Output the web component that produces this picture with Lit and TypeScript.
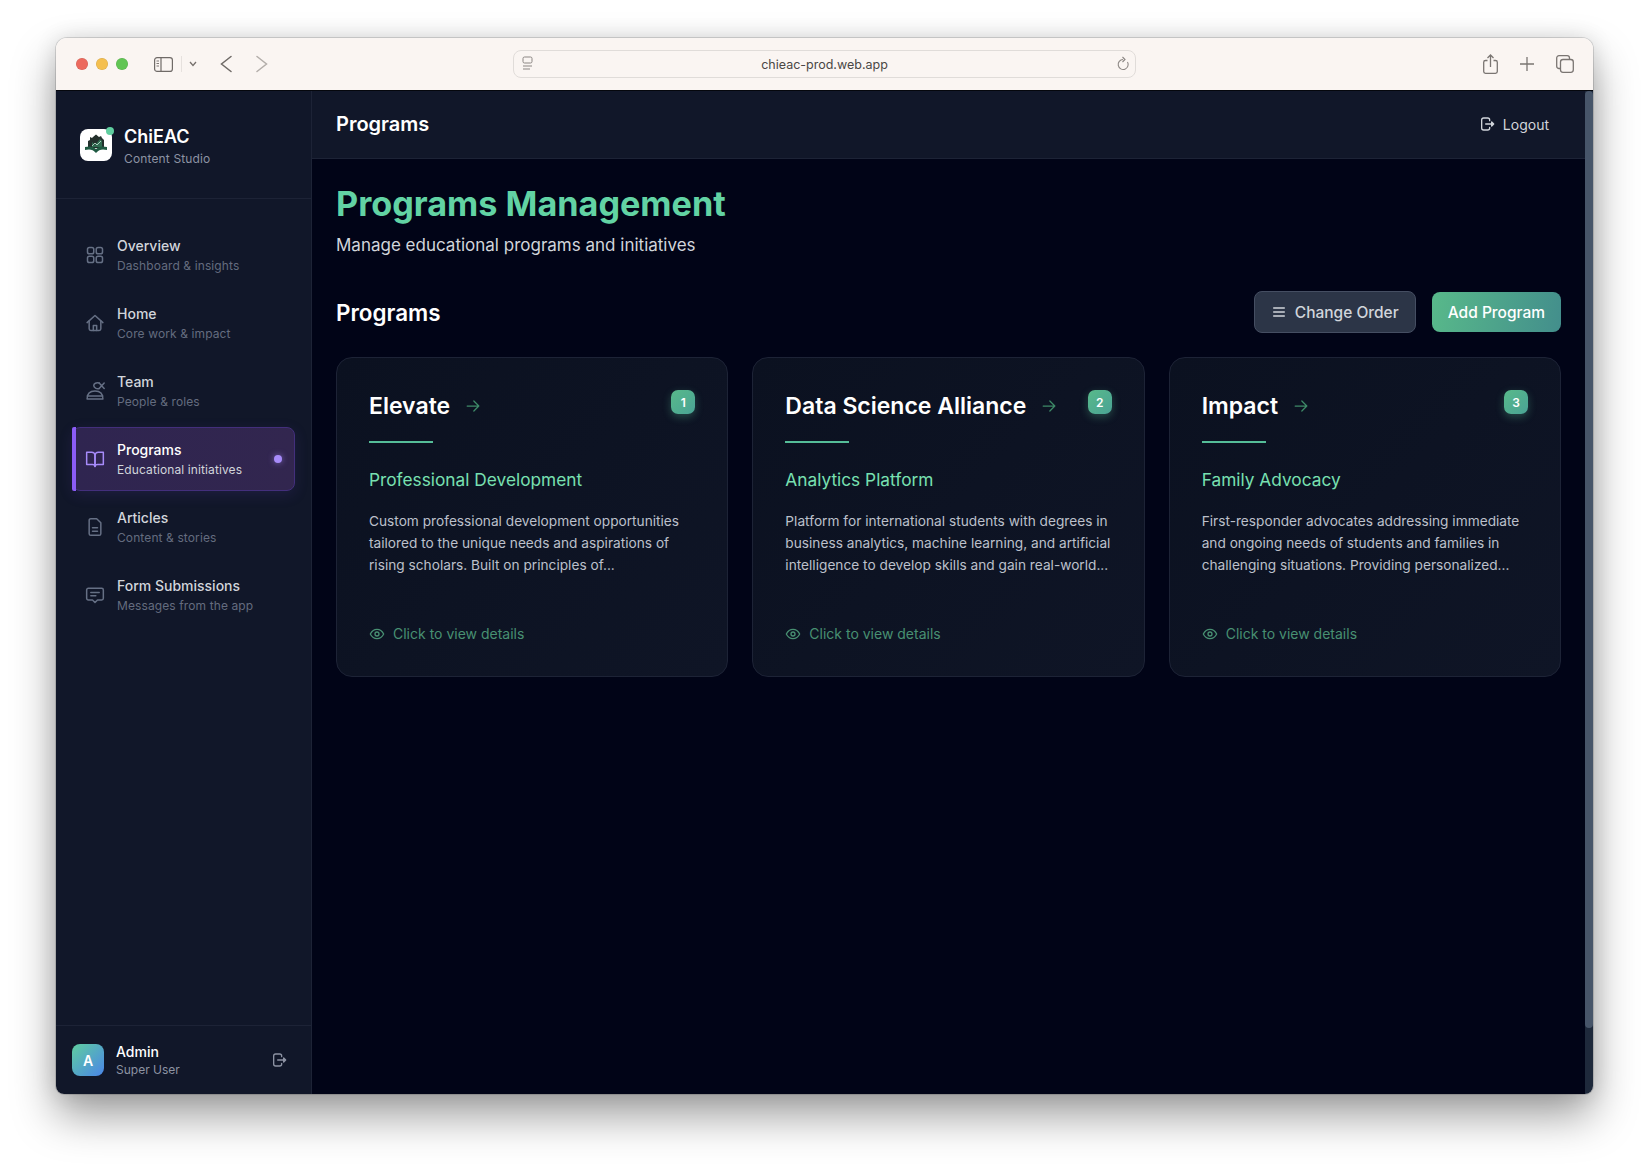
import { LitElement, html, css, svg } from "lit";
import { customElement } from "lit/decorators.js";

const ic = (body: unknown, size = 20, sw = 2) => html`<svg width=${size} height=${size} viewBox="0 0 24 24" fill="none" stroke="currentColor" stroke-width=${sw} stroke-linecap="round" stroke-linejoin="round">${body}</svg>`;

const logoutP = svg`<path d="M16 7V6a3 3 0 0 0-3-3H7a3 3 0 0 0-3 3v12a3 3 0 0 0 3 3h6a3 3 0 0 0 3-3v-1"/><path d="M10 12h9"/><path d="M19 9l3 3-3 3z" fill="currentColor"/>`;

const nav = [
  { t: "Overview", s: "Dashboard & insights", i: svg`<rect x="3" y="3" width="7.500" height="7.500" rx="2.200"/><rect x="13.500" y="3" width="7.500" height="7.500" rx="2.200"/><rect x="3" y="13.500" width="7.500" height="7.500" rx="2.200"/><rect x="13.500" y="13.500" width="7.500" height="7.500" rx="2.200"/>` },
  { t: "Home", s: "Core work & impact", i: svg`<path d="M2.500 11.500L12 3l9.500 8.500"/><path d="M5 9.500V19a2 2 0 0 0 2 2h10a2 2 0 0 0 2-2V9.500"/><path d="M10 21v-6h4v6"/>` },
  { t: "Team", s: "People & roles", i: svg`<path d="M2.500 21.500c0-6 3-9.500 9.500-9.500s9.500 3.500 9.500 9.500z"/><path d="M2.800 18h18.400"/><path d="M17 2.500c-3.500-1-6.500 .5-6.500 3S14 10 17 9"/><path d="M17 2.500l6 6.500M17 9l6-6.500"/>` },
  { t: "Programs", s: "Educational initiatives", active: true, i: svg`<path d="M2 4h6a4 4 0 0 1 4 3.500V21a3 3 0 0 0-3-2.500H2z"/><path d="M22 4h-6a4 4 0 0 0-4 3.500V21a3 3 0 0 1 3-2.500h7z"/>` },
  { t: "Articles", s: "Content & stories", i: svg`<path d="M14 2H7a2 2 0 0 0-2 2v16a2 2 0 0 0 2 2h10a2 2 0 0 0 2-2V7z"/><path d="M9 13h6"/><path d="M9 17h6"/>` },
  { t: "Form Submissions", s: "Messages from the app", i: svg`<path d="M4 4h16a2 2 0 0 1 2 2v10a2 2 0 0 1-2 2h-5l-3 3-3-3H4a2 2 0 0 1-2-2V6a2 2 0 0 1 2-2z"/><path d="M7 9h10"/><path d="M7 13h6"/>` },
];

const cards = [
  { n: 1, t: "Elevate", s: "Professional Development", d: "Custom professional development opportunities tailored to the unique needs and aspirations of rising scholars. Built on principles of..." },
  { n: 2, t: "Data Science Alliance", s: "Analytics Platform", d: "Platform for international students with degrees in business analytics, machine learning, and artificial intelligence to develop skills and gain real-world..." },
  { n: 3, t: "Impact", s: "Family Advocacy", d: "First-responder advocates addressing immediate and ongoing needs of students and families in challenging situations. Providing personalized..." },
];

@customElement("app-root")
export class AppRoot extends LitElement {
  static styles = css`
    :host { display: block; width: 1649px; height: 1168px; box-sizing: border-box; padding: 38px 56px 74px; background: #fff; font-family: Inter, "Liberation Sans", sans-serif; overflow: hidden; }
    * { box-sizing: border-box; }
    .win { width: 1537px; height: 1056px; border-radius: 11px 11px 8px 8px; overflow: hidden; display: flex; flex-direction: column; box-shadow: 0 22px 44px rgba(0,0,0,.38), 0 0 22px rgba(0,0,0,.12), 0 0 0 1px rgba(0,0,0,.13); }
    .chrome { height: 52px; flex: none; background: #faf5f2; display: flex; align-items: center; padding-left: 20px; color: #6f6a67; position: relative; }
    .dots { display: flex; gap: 8px; }
    .dot { width: 12px; height: 12px; border-radius: 50%; box-shadow: inset 0 0 0 .5px rgba(0,0,0,.12); }
    .sb { margin-left: 26px; display: flex; }
    .sep { width: 1px; height: 16px; background: #e6e1de; margin-left: 8px; }
    .chev { margin-left: 7px; display: flex; color: #77716e; }
    .nav { display: flex; margin-left: 23px; gap: 24px; }
    .url { position: absolute; left: 457px; width: 623px; top: 12px; height: 28px; border: 1px solid #e0dcd9; border-radius: 8px; display: flex; align-items: center; justify-content: center; font-size: 12.500px; color: #4a4745; }
    .url .l { position: absolute; left: 7px; top: 5px; display: flex; color: #8b8683; }
    .url .r { position: absolute; right: 4px; top: 5px; display: flex; color: #8b8683; }
    .tools { margin-left: auto; display: flex; align-items: center; gap: 22px; padding-right: 19px; color: #7a7572; }
    .body { flex: 1; display: flex; min-height: 0; border-top: 1px solid #05070d; }
    .side { width: 256px; flex: none; background: #111729; border-right: 1px solid #1d2336; display: flex; flex-direction: column; }
    .brand { height: 108px; flex: none; border-bottom: 1px solid #1d2336; display: flex; align-items: center; padding: 0 24px; gap: 12px; }
    .logo { width: 32px; height: 32px; background: #fff; border-radius: 8px; position: relative; display: flex; align-items: center; justify-content: center; }
    .logo i { position: absolute; top: -2px; right: -2px; width: 8px; height: 8px; border-radius: 50%; background: #5fce9f; }
    .bname { font-size: 18px; font-weight: 600; color: #fff; line-height: 28px; }
    .bsub { font-size: 12px; color: #8d93a3; line-height: 16px; letter-spacing: .012em; }
    .menu { flex: 1; padding: 24px 16px; display: flex; flex-direction: column; gap: 4px; }
    .item { height: 64px; border-radius: 8px; display: flex; align-items: center; padding-left: 12px; gap: 12px; color: #667085; position: relative; border: 1px solid transparent; }
    .item .ico { display: flex; width: 20px; }
    .item .t { font-size: 14px; font-weight: 500; color: #d1d5db; line-height: 20px; }
    .item .s { font-size: 12px; color: #646c7f; line-height: 16px; margin-top: 2px; letter-spacing: .009em; }
    .item.on { background: linear-gradient(90deg, #2f2550, #32264f); border-color: #432f7c; box-shadow: 0 4px 14px rgba(88,60,170,.18); color: #a78bfa; }
    .item.on .t { color: #fff; }
    .item.on .s { color: #d1d5db; }
    .bar { position: absolute; left: -1px; top: -1px; bottom: -1px; width: 4px; background: #8b5cf6; border-radius: 2px 0 0 2px; }
    .pulse { position: absolute; right: 12px; top: 27px; width: 8px; height: 8px; border-radius: 50%; background: #a78bfa; box-shadow: 0 0 6px rgba(167,139,250,.6); }
    .user { height: 69px; flex: none; border-top: 1px solid #1d2336; display: flex; align-items: center; padding: 0 24px 0 16px; gap: 12px; }
    .av { width: 32px; height: 32px; border-radius: 8px; background: linear-gradient(135deg, #5fce9f, #4a85e8); color: #fff; font-size: 14px; font-weight: 600; display: flex; align-items: center; justify-content: center; }
    .uname { font-size: 14px; font-weight: 500; color: #fff; line-height: 20px; }
    .urole { font-size: 12px; color: #8d93a3; line-height: 16px; }
    .uout { margin-left: auto; display: flex; color: #8d93a3; }
    .main { flex: 1; min-width: 0; display: flex; flex-direction: column; background: #010417; }
    .top { height: 68px; flex: none; background: #111729; border-bottom: 1px solid #1d2336; display: flex; align-items: center; justify-content: space-between; padding: 0 24px 1px 24px; }
    .top h2 { margin: 0; font-size: 20px; font-weight: 600; color: #fff; }
    .out { display: flex; align-items: center; gap: 8px; padding: 0 12px; font-size: 14px; color: #d1d5db; }
    .out span { display: flex; }
    .content { flex: 1; padding: 25px 24px 24px; }
    h1 { margin: 0; font-size: 34.200px; line-height: 40px; font-weight: 700; color: #62d3a4; }
    .lead { font-size: 17px; line-height: 28px; color: #d1d5db; margin-top: 7px; }
    .row { display: flex; align-items: center; justify-content: space-between; margin-top: 32px; height: 42px; }
    .row h3 { margin: 0; padding-top: 2px; font-size: 22.400px; line-height: 32px; font-weight: 600; color: #fff; }
    .btns { display: flex; gap: 16px; align-items: center; }
    .b { height: 42px; border-radius: 8px; border: 1px solid #454e62; background: #2c3547; color: #d1d5db; font-size: 15.500px; font-weight: 500; display: flex; align-items: center; gap: 8px; padding: 0 16px; }
    .b svg { display: block; }
    .g { height: 40px; border: 0; background: linear-gradient(100deg, #58b98a, #438e8c); color: #fff; }
    .grid { display: grid; grid-template-columns: repeat(3, 1fr); gap: 24px; margin-top: 24px; }
    .card { height: 320px; border-radius: 16px; border: 1px solid #1d2336; background: linear-gradient(135deg, #0b1120, #0f1526); padding: 32px; position: relative; display: flex; flex-direction: column; }
    .ct { display: flex; align-items: center; gap: 13px; height: 32px; }
    .ct b { font-size: 23px; line-height: 32px; font-weight: 600; color: #fff; }
    .ct span { display: flex; color: #3e8a68; }
    .num { position: absolute; top: 32px; right: 32px; width: 24px; height: 24px; border-radius: 7px; background: linear-gradient(135deg, #58b98a, #4aa395); box-shadow: 0 3px 8px rgba(95,206,159,.3); color: #fff; font-size: 12px; font-weight: 600; display: flex; align-items: center; justify-content: center; }
    .rule { width: 64px; height: 2px; background: #55bd98; margin-top: 19px; }
    .sub { font-size: 17.300px; line-height: 28px; color: #78e0b1; margin-top: 23px; }
    .desc { font-size: 13.700px; line-height: 22px; color: #bcc0cb; margin-top: 16px; }
    .view { margin-top: auto; display: flex; align-items: center; gap: 8px; font-size: 14px; line-height: 20px; color: #489072; }
    .view span { display: flex; }
    .scroll { width: 8px; flex: none; background: #1e293b; }
    .scroll div { height: 937px; background: #475569; border-radius: 4px; }
  `;

  render() {
    return html`<div class="win">
      <div class="chrome">
        <div class="dots"><div class="dot" style="background:#ec6a5e"></div><div class="dot" style="background:#f4bf4f"></div><div class="dot" style="background:#61c554"></div></div>
        <div class="sb"><svg width="19" height="15" viewBox="0 0 19 15" fill="none" stroke="currentColor" stroke-width="1.200"><rect x=".6" y=".6" width="17.800" height="13.800" rx="2.500"/><path d="M7 .6v13.800"/><path d="M2.500 4h2.500M2.500 6.500h2.500M2.500 9h2.500" stroke-width=".9"/></svg></div>
        <div class="sep"></div>
        <div class="chev"><svg width="8" height="6" viewBox="0 0 8 6" fill="none" stroke="currentColor" stroke-width="1.300"><path d="M1 1l3 3.500L7 1"/></svg></div>
        <div class="nav">
          <svg width="12" height="18" viewBox="0 0 12 18" fill="none" stroke="#6f6a67" stroke-width="1.500" stroke-linecap="round"><path d="M11 1.500L1.500 9l9.500 7.500"/></svg>
          <svg width="12" height="18" viewBox="0 0 12 18" fill="none" stroke="#b3aeaa" stroke-width="1.500" stroke-linecap="round"><path d="M1 1.500L10.500 9 1 16.500"/></svg>
        </div>
        <div class="url">
          <span class="l"><svg width="14" height="16" viewBox="0 0 14 16" fill="none" stroke="currentColor" stroke-width="1"><rect x="2" y="1" width="9" height="6" rx="1.500"/><path d="M2 10h9M2 13h7"/></svg></span>
          chieac-prod.web.app
          <span class="r"><svg width="16" height="16" viewBox="0 0 16 16" fill="none" stroke="currentColor" stroke-width="1.100"><path d="M12.500 6A5 5 0 1 1 8 3.500"/><path d="M7.500 1l2.500 2.500-2.500 2.500"/></svg></span>
        </div>
        <div class="tools">
          <svg width="15" height="20" viewBox="0 0 15 20" fill="none" stroke="currentColor" stroke-width="1.300"><path d="M4.500 6.500H2.500A1.800 1.800 0 0 0 .7 8.300v9.200a1.800 1.800 0 0 0 1.800 1.800h10a1.800 1.800 0 0 0 1.800-1.800V8.300a1.800 1.800 0 0 0-1.800-1.800h-2"/><path d="M7.500 13V1M4.500 4l3-3 3 3"/></svg>
          <svg width="14" height="14" viewBox="0 0 14 14" fill="none" stroke="currentColor" stroke-width="1.300"><path d="M7 0v14M0 7h14"/></svg>
          <svg width="18" height="18" viewBox="0 0 18 18" fill="none" stroke="currentColor" stroke-width="1.300"><rect x="4.500" y="4.500" width="12.800" height="12.800" rx="2.500"/><path d="M4.500 13.500H3A2.300 2.300 0 0 1 .7 11.200V3A2.300 2.300 0 0 1 3 .7h8.200A2.300 2.300 0 0 1 13.500 3v1.500"/></svg>
        </div>
      </div>
      <div class="body">
        <aside class="side">
          <div class="brand">
            <div class="logo">
              <svg width="24" height="22" viewBox="0 0 24 22"><path d="M4 14V7l2-1V3l2 1 1-1 3-2.500L15 3l2-1 1 2 2 2v8z" fill="#23302c"/><path d="M8 8l3 3 5-6 2 2v6H8z" fill="#2f6b50"/><path d="M8 12l3-3 2 2 4-4" stroke="#c8e8d8" stroke-width=".8" fill="none"/><path d="M1 13c4-1 8-1 11 2 3-3 7-3 11-2v3c-4-1-8-1-11 3-3-4-7-4-11-3z" fill="#1f5a42"/></svg>
              <i></i>
            </div>
            <div><div class="bname">ChiEAC</div><div class="bsub">Content Studio</div></div>
          </div>
          <nav class="menu">
            ${nav.map((n) => html`<div class="item ${n.active ? "on" : ""}">
              ${n.active ? html`<span class="bar"></span><span class="pulse"></span>` : ""}
              <span class="ico">${ic(n.i, 20, 1.8)}</span>
              <div><div class="t">${n.t}</div><div class="s">${n.s}</div></div>
            </div>`)}
          </nav>
          <div class="user">
            <div class="av">A</div>
            <div><div class="uname">Admin</div><div class="urole">Super User</div></div>
            <span class="uout">${ic(logoutP, 16, 2)}</span>
          </div>
        </aside>
        <main class="main">
          <header class="top"><h2>Programs</h2><div class="out"><span>${ic(logoutP, 16, 2)}</span>Logout</div></header>
          <section class="content">
            <h1>Programs Management</h1>
            <div class="lead">Manage educational programs and initiatives</div>
            <div class="row">
              <h3>Programs</h3>
              <div class="btns">
                <div class="b">${ic(svg`<path d="M4 6h16M4 12h16M4 18h16"/>`, 16, 2)}Change Order</div>
                <div class="b g">Add Program</div>
              </div>
            </div>
            <div class="grid">
              ${cards.map((c) => html`<article class="card">
                <div class="ct"><b>${c.t}</b><span>${ic(svg`<path d="M5 12h14M13 6l6 6-6 6"/>`, 20, 1.5)}</span></div>
                <div class="num">${c.n}</div>
                <div class="rule"></div>
                <div class="sub">${c.s}</div>
                <div class="desc">${c.d}</div>
                <div class="view"><span>${ic(svg`<path d="M2 12s3.500-7 10-7 10 7 10 7-3.500 7-10 7-10-7-10-7z"/><circle cx="12" cy="12" r="3"/>`, 16, 2)}</span>Click to view details</div>
              </article>`)}
            </div>
          </section>
        </main>
        <div class="scroll"><div></div></div>
      </div>
    </div>`;
  }
}
